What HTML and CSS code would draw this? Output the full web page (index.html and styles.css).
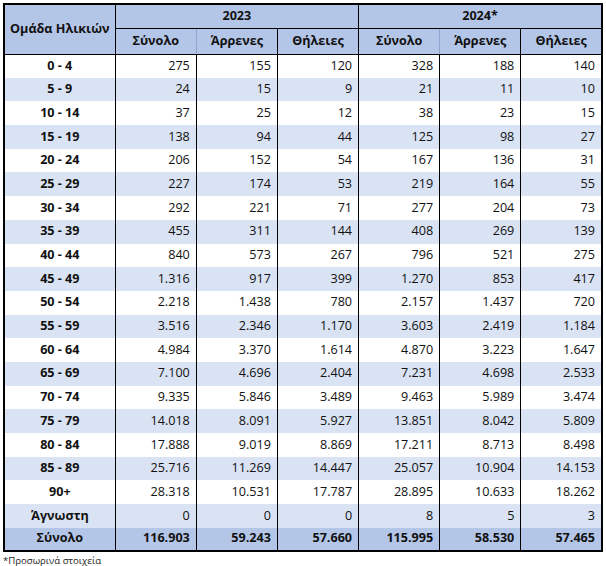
FILE: index.html
```html
<!DOCTYPE html>
<html lang="el">
<head>
<meta charset="utf-8">
<title>Ομάδα Ηλικιών</title>
<link rel="stylesheet" href="styles.css">
</head>
<body>
<div class="page">
<table class="stats">
  <colgroup>
    <col class="c-age">
    <col class="c-num"><col class="c-num"><col class="c-num">
    <col class="c-num"><col class="c-num"><col class="c-num">
  </colgroup>
  <thead>
    <tr class="h1">
      <th rowspan="2" class="age-h">Ομάδα Ηλικιών</th>
      <th colspan="3" class="year">2023</th>
      <th colspan="3" class="year">2024*</th>
    </tr>
    <tr class="h2">
      <th class="soft">Σύνολο</th><th>Άρρενες</th><th>Θήλειες</th>
      <th class="soft">Σύνολο</th><th>Άρρενες</th><th>Θήλειες</th>
    </tr>
  </thead>
  <tbody>
    <tr><th>0 - 4</th><td>275</td><td>155</td><td>120</td><td>328</td><td>188</td><td>140</td></tr>
    <tr><th>5 - 9</th><td>24</td><td>15</td><td>9</td><td>21</td><td>11</td><td>10</td></tr>
    <tr><th>10 - 14</th><td>37</td><td>25</td><td>12</td><td>38</td><td>23</td><td>15</td></tr>
    <tr><th>15 - 19</th><td>138</td><td>94</td><td>44</td><td>125</td><td>98</td><td>27</td></tr>
    <tr><th>20 - 24</th><td>206</td><td>152</td><td>54</td><td>167</td><td>136</td><td>31</td></tr>
    <tr><th>25 - 29</th><td>227</td><td>174</td><td>53</td><td>219</td><td>164</td><td>55</td></tr>
    <tr><th>30 - 34</th><td>292</td><td>221</td><td>71</td><td>277</td><td>204</td><td>73</td></tr>
    <tr><th>35 - 39</th><td>455</td><td>311</td><td>144</td><td>408</td><td>269</td><td>139</td></tr>
    <tr><th>40 - 44</th><td>840</td><td>573</td><td>267</td><td>796</td><td>521</td><td>275</td></tr>
    <tr><th>45 - 49</th><td>1.316</td><td>917</td><td>399</td><td>1.270</td><td>853</td><td>417</td></tr>
    <tr><th>50 - 54</th><td>2.218</td><td>1.438</td><td>780</td><td>2.157</td><td>1.437</td><td>720</td></tr>
    <tr><th>55 - 59</th><td>3.516</td><td>2.346</td><td>1.170</td><td>3.603</td><td>2.419</td><td>1.184</td></tr>
    <tr><th>60 - 64</th><td>4.984</td><td>3.370</td><td>1.614</td><td>4.870</td><td>3.223</td><td>1.647</td></tr>
    <tr><th>65 - 69</th><td>7.100</td><td>4.696</td><td>2.404</td><td>7.231</td><td>4.698</td><td>2.533</td></tr>
    <tr><th>70 - 74</th><td>9.335</td><td>5.846</td><td>3.489</td><td>9.463</td><td>5.989</td><td>3.474</td></tr>
    <tr><th>75 - 79</th><td>14.018</td><td>8.091</td><td>5.927</td><td>13.851</td><td>8.042</td><td>5.809</td></tr>
    <tr><th>80 - 84</th><td>17.888</td><td>9.019</td><td>8.869</td><td>17.211</td><td>8.713</td><td>8.498</td></tr>
    <tr><th>85 - 89</th><td>25.716</td><td>11.269</td><td>14.447</td><td>25.057</td><td>10.904</td><td>14.153</td></tr>
    <tr><th>90+</th><td>28.318</td><td>10.531</td><td>17.787</td><td>28.895</td><td>10.633</td><td>18.262</td></tr>
    <tr><th>Άγνωστη</th><td>0</td><td>0</td><td>0</td><td>8</td><td>5</td><td>3</td></tr>
  </tbody>
  <tfoot>
    <tr class="total"><th>Σύνολο</th><td>116.903</td><td>59.243</td><td>57.660</td><td>115.995</td><td>58.530</td><td>57.465</td></tr>
  </tfoot>
</table>
<p class="note">*Προσωρινά στοιχεία</p>
</div>
</body>
</html>
```
FILE: styles.css
```css
html, body {
  margin: 0;
  padding: 0;
  background: #ffffff;
}
.page {
  padding: 3px 0 0 3px;
  font-family: "Open Sans", "Noto Sans", "DejaVu Sans", sans-serif;
  color: #111111;
}
.stats {
  border-collapse: collapse;
  table-layout: fixed;
  width: 600px;
  border: 2px solid #000;
  font-size: 12.6px;
}
.c-age { width: 111px; }
.c-num { width: 81px; }
.stats th, .stats td {
  padding: 0 6px 0 4px;
  border-left: 1px solid #000;
  border-right: 1px solid #000;
  white-space: nowrap;
  overflow: hidden;
  line-height: 1;
}
.stats thead th {
  background: #b4c6e7;
  font-weight: 700;
  text-align: center;
  padding: 0 4px;
}
.h1 { height: 24px; }
.h2 { height: 26px; }
.h1 .year { border-bottom: 1px solid #000; }
.h2 th { border-bottom: 1px solid #000; }
.h2 .soft { border-right: 1px solid #8ea5cf; }
.stats .age-h { border-bottom: 1px solid #000; }
.stats tbody tr { height: 23.7px; }
.stats tbody tr:nth-child(even) { background: #dae3f3; }
.stats tbody th, .stats tfoot th {
  font-weight: 700;
  text-align: center;
  padding: 0 4px;
}
.stats td { text-align: right; }
.total { height: 23px; background: #b4c6e7; }
.total th, .total td { font-weight: 700; }
.note {
  margin: 3px 0 0 0;
  font-size: 9.6px;
  line-height: 12px;
  color: #222;
}
```
